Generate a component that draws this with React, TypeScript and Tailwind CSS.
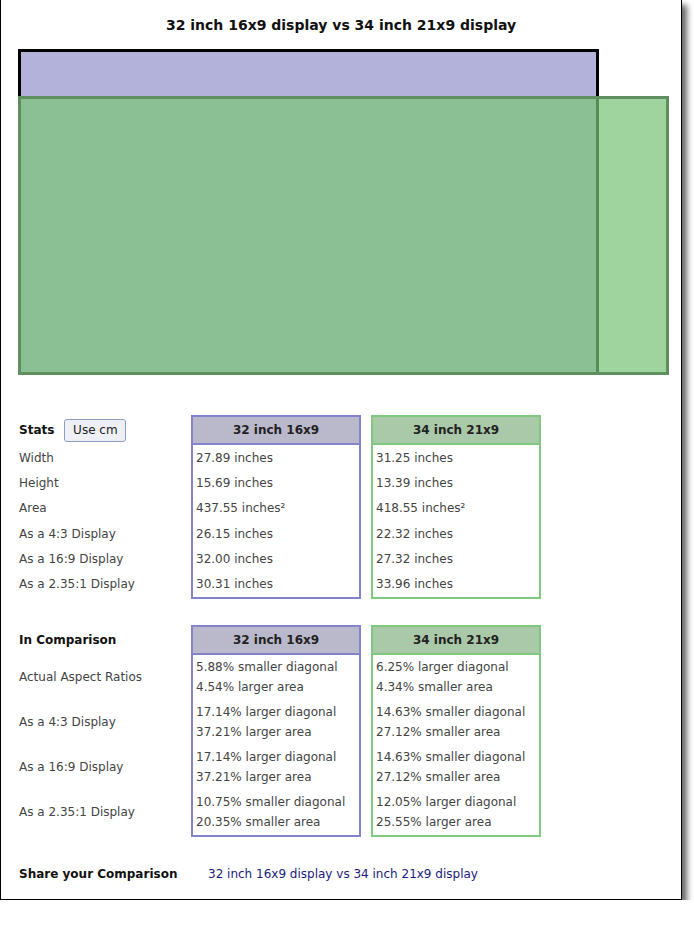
import React from "react";

const statLabels = ["Width", "Height", "Area", "As a 4:3 Display", "As a 16:9 Display", "As a 2.35:1 Display"];
const stat1 = ["27.89 inches", "15.69 inches", "437.55 inches²", "26.15 inches", "32.00 inches", "30.31 inches"];
const stat2 = ["31.25 inches", "13.39 inches", "418.55 inches²", "22.32 inches", "27.32 inches", "33.96 inches"];

const compLabels = ["Actual Aspect Ratios", "As a 4:3 Display", "As a 16:9 Display", "As a 2.35:1 Display"];
const comp1 = [
  ["5.88% smaller diagonal", "4.54% larger area"],
  ["17.14% larger diagonal", "37.21% larger area"],
  ["17.14% larger diagonal", "37.21% larger area"],
  ["10.75% smaller diagonal", "20.35% smaller area"],
];
const comp2 = [
  ["6.25% larger diagonal", "4.34% smaller area"],
  ["14.63% smaller diagonal", "27.12% smaller area"],
  ["14.63% smaller diagonal", "27.12% smaller area"],
  ["12.05% larger diagonal", "25.55% larger area"],
];

function StatBox({ title, values, purple }: { title: string; values: string[]; purple: boolean }) {
  return (
    <div className={`flex w-[170px] flex-col border-2 ${purple ? "border-[#8484cc]" : "border-[#7fc97f]"}`}>
      <div
        className={`flex h-[28px] items-center justify-center border-b-2 text-[12px] font-bold text-[#222] ${
          purple ? "border-[#8484cc] bg-[#bab9cb]" : "border-[#7fc97f] bg-[#aac9a8]"
        }`}
      >
        {title}
      </div>
      {values.map((v, i) => (
        <div key={i} className="flex h-[25.3px] items-center px-[3px] text-[12px] text-[#444]">
          {v}
        </div>
      ))}
    </div>
  );
}

function CompBox({ title, values, purple }: { title: string; values: string[][]; purple: boolean }) {
  return (
    <div className={`flex w-[170px] flex-col border-2 ${purple ? "border-[#8484cc]" : "border-[#7fc97f]"}`}>
      <div
        className={`flex h-[28px] items-center justify-center border-b-2 text-[12px] font-bold text-[#222] ${
          purple ? "border-[#8484cc] bg-[#bab9cb]" : "border-[#7fc97f] bg-[#aac9a8]"
        }`}
      >
        {title}
      </div>
      {values.map((v, i) => (
        <div key={i} className="flex h-[45px] flex-col justify-center px-[3px] text-[12px] leading-[20px] text-[#444]">
          <div>{v[0]}</div>
          <div>{v[1]}</div>
        </div>
      ))}
    </div>
  );
}

export default function App() {
  return (
    <div className="bg-white" style={{ fontFamily: '"DejaVu Sans", Verdana, sans-serif' }}>
      <div className="relative h-[900px] w-[682px] border-b border-l border-r border-black bg-white shadow-[5px_5px_6px_rgba(0,0,0,0.6)]">
        <div className="pt-[15px] text-center text-[14px] font-bold leading-[20px] text-[#111]">
          32 inch 16x9 display vs 34 inch 21x9 display
        </div>

        <div className="relative ml-[17px] mt-[14px] h-[326px] w-[651px]">
          <div className="absolute left-0 top-0 h-[326px] w-[581px] border-[3px] border-black bg-[#b2b2da]" />
          <div className="absolute bottom-0 left-0 h-[279px] w-[651px] border-[3px] border-[#5f8f5f] bg-[rgba(124,196,121,0.72)]" />
        </div>

        <div className="ml-[17px] mt-[40px] flex">
          <div className="flex w-[173px] flex-col">
            <div className="flex h-[30px] items-center gap-[10px] pl-[1px]">
              <span className="text-[12px] font-bold text-[#111]">Stats</span>
              <button className="h-[23px] w-[62px] rounded-[3px] border border-[#8d9cc2] bg-[#eef0f6] text-[12px] text-[#222]">
                Use cm
              </button>
            </div>
            {statLabels.map((l, i) => (
              <div key={i} className="flex h-[25.3px] items-center pl-[1px] text-[12px] text-[#444]">
                {l}
              </div>
            ))}
          </div>
          <StatBox title="32 inch 16x9" values={stat1} purple />
          <div className="w-[10px]" />
          <StatBox title="34 inch 21x9" values={stat2} purple={false} />
        </div>

        <div className="ml-[17px] mt-[26px] flex">
          <div className="flex w-[173px] flex-col">
            <div className="flex h-[30px] items-center pl-[1px] text-[12px] font-bold text-[#111]">In Comparison</div>
            {compLabels.map((l, i) => (
              <div key={i} className="flex h-[45px] items-center pl-[1px] text-[12px] text-[#444]">
                {l}
              </div>
            ))}
          </div>
          <CompBox title="32 inch 16x9" values={comp1} purple />
          <div className="w-[10px]" />
          <CompBox title="34 inch 21x9" values={comp2} purple={false} />
        </div>

        <div className="ml-[18px] mt-[27px] flex h-[20px] items-center text-[12px]">
          <span className="w-[189px] font-bold text-[#111]">Share your Comparison</span>
          <span className="text-[#1a1a80]">32 inch 16x9 display vs 34 inch 21x9 display</span>
        </div>
      </div>
    </div>
  );
}
